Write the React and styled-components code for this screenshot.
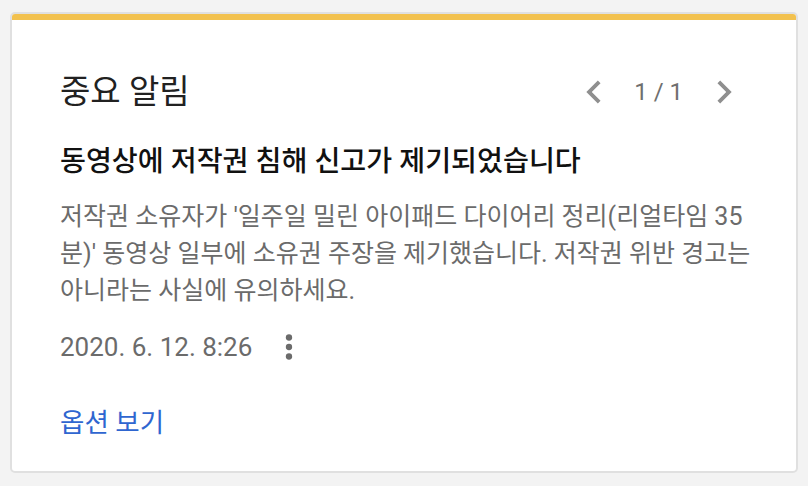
import React from "react";
import styled, { createGlobalStyle } from "styled-components";

const GlobalStyle = createGlobalStyle`
  html, body {
    margin: 0;
    padding: 0;
    background: #f3f3f3;
  }
  body {
    font-family: Roboto, "Noto Sans CJK KR", sans-serif;
  }
`;

const Page = styled.div`
  padding: 12px 10px 13px 10px;
`;

const Card = styled.div`
  background: #fff;
  border: 2px solid #e0e0e0;
  border-radius: 5px;
  overflow: hidden;
  height: 461px;
  box-sizing: border-box;
`;

const Accent = styled.div`
  height: 6px;
  background: #f2c14e;
`;

const Body = styled.div`
  padding: 52px 48px 0 48px;
`;

const Header = styled.div`
  display: flex;
  align-items: center;
  justify-content: space-between;
  height: 40px;
`;

const Title = styled.h2`
  margin: 0;
  font-size: 33px;
  font-weight: 400;
  color: #212121;
  line-height: 40px;
`;

const Pager = styled.div`
  display: flex;
  align-items: center;
  margin-right: 1px;
  color: #6f6f6f;
  font-size: 24px;
`;

const NavButton = styled.button`
  border: none;
  background: transparent;
  padding: 0;
  display: flex;
  cursor: pointer;
`;

const Count = styled.span`
  margin: 0 18px 0 17px;
`;

const Heading = styled.h3`
  margin: 32px 0 0;
  font-size: 28.2px;
  font-weight: 500;
  color: #111;
  line-height: 36px;
`;

const Text = styled.p`
  margin: 18px -10px 0 0;
  font-size: 25px;
  line-height: 37px;
  color: #6b6b6b;
`;

const Meta = styled.div`
  display: flex;
  align-items: center;
  height: 36px;
  margin-top: 20px;
  font-size: 26px;
  color: #6b6b6b;
`;

const Kebab = styled.button`
  border: none;
  background: transparent;
  padding: 0;
  margin-left: 18px;
  display: flex;
  cursor: pointer;
`;

const Link = styled.a`
  display: inline-block;
  margin-top: 40px;
  font-size: 26.5px;
  line-height: 36px;
  color: #2f66d0;
  text-decoration: none;
`;

const Chevron = ({ dir }) => (
  <svg width="46" height="46" viewBox="0 0 24 24" fill="#8f8f8f">
    <path
      d={
        dir === "left"
          ? "M15.41 7.41 14 6l-6 6 6 6 1.41-1.41L10.83 12z"
          : "M10 6 8.59 7.41 13.17 12l-4.58 4.59L10 18l6-6z"
      }
    />
  </svg>
);

const MoreVert = () => (
  <svg width="38" height="38" viewBox="0 0 24 24" fill="#6b6b6b">
    <circle cx="12" cy="6" r="2" />
    <circle cx="12" cy="12" r="2" />
    <circle cx="12" cy="18" r="2" />
  </svg>
);

export default function App() {
  return (
    <Page>
      <GlobalStyle />
      <Card>
        <Accent />
        <Body>
          <Header>
            <Title>중요 알림</Title>
            <Pager>
              <NavButton>
                <Chevron dir="left" />
              </NavButton>
              <Count>1 / 1</Count>
              <NavButton>
                <Chevron dir="right" />
              </NavButton>
            </Pager>
          </Header>
          <Heading>동영상에 저작권 침해 신고가 제기되었습니다</Heading>
          <Text>
            저작권 소유자가 '일주일 밀린 아이패드 다이어리 정리(리얼타임 35
            분)' 동영상 일부에 소유권 주장을 제기했습니다. 저작권 위반 경고는
            아니라는 사실에 유의하세요.
          </Text>
          <Meta>
            <span>2020. 6. 12. 8:26</span>
            <Kebab>
              <MoreVert />
            </Kebab>
          </Meta>
          <Link href="#">옵션 보기</Link>
        </Body>
      </Card>
    </Page>
  );
}
